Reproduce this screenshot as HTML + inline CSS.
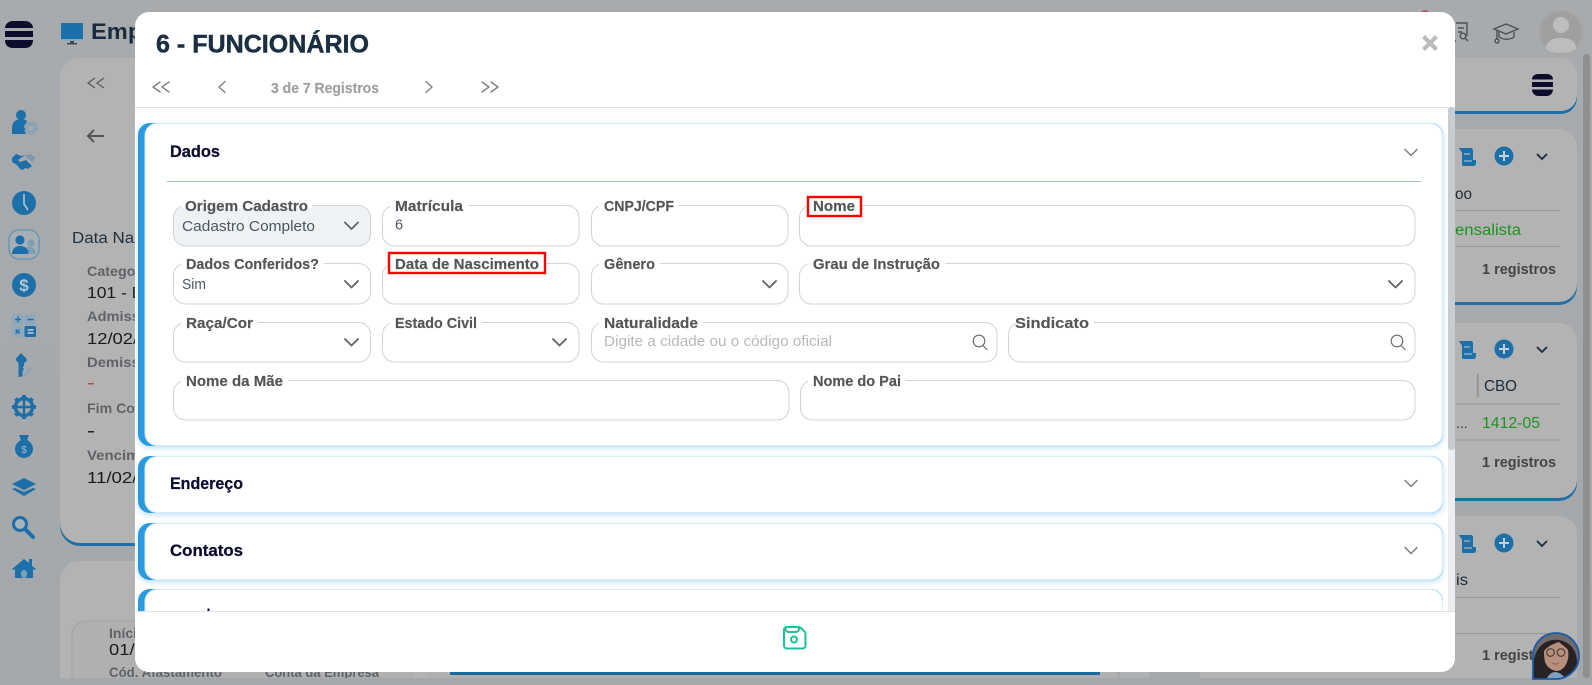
<!DOCTYPE html>
<html lang="pt"><head><meta charset="utf-8"><title>6 - FUNCIONÁRIO</title>
<style>
html,body{margin:0;padding:0;background:#a6a9ac;overflow:hidden}
svg{display:block}
text{font-family:"Liberation Sans",sans-serif}
.l{font-size:14.5px;font-weight:700;fill:#555;stroke:#555;stroke-width:.15px}
.v{font-size:14.5px;fill:#4b5662}
.f{fill:#fff;stroke:#cfd3da;stroke-width:1}
.c{fill:none;stroke:#666;stroke-width:1.9;stroke-linecap:round;stroke-linejoin:round}
.n{fill:none;stroke:#808080;stroke-width:1.4;stroke-linejoin:round;stroke-linecap:round}
.k{fill:none;stroke:#ff0000;stroke-width:2.4}
.h{font-size:16.5px;font-weight:700;fill:#0b0b30;stroke:#0b0b30;stroke-width:.25px}
.bl{font-size:14px;font-weight:700;fill:#5f6368}
.bv{font-size:15.5px;fill:#1a1a1a}
.i{fill:#1c6fa9}
.ln{stroke:#9a9a9d;stroke-width:1.3}
</style></head><body>
<svg width="1592" height="685" viewBox="0 0 1592 685" xmlns="http://www.w3.org/2000/svg">
<defs>
<linearGradient id="g1" x1="0" y1="0" x2="0" y2="1"><stop offset="0" stop-color="#a7abae"/><stop offset="1" stop-color="#a5a8aa"/></linearGradient>
<clipPath id="cl"><rect x="0" y="0" width="1592" height="678"/></clipPath>
<clipPath id="av"><path d="M1533 679V656a23 23 0 1 1 23 23z"/></clipPath>
</defs>
<rect width="1592" height="685" fill="url(#g1)"/>

<!-- background cards -->
<g clip-path="url(#cl)">
<rect x="60" y="61" width="400" height="485" rx="20" fill="#1f6fa6"/>
<rect x="60" y="58" width="400" height="485" rx="20" fill="#b3b3b3"/>
<rect x="60" y="561" width="400" height="140" rx="20" fill="#b3b3b3"/>
<rect x="72" y="621" width="340" height="90" rx="14" fill="#b0b0b0" stroke="#a3a3a3"/>
<rect x="428" y="561" width="690" height="130" fill="#b0b0b0"/>
<rect x="1120" y="561" width="30" height="130" fill="#afb2b4"/>
<rect x="1200" y="61" width="377" height="53" rx="16" fill="#1f6fa6"/>
<rect x="1200" y="58" width="377" height="53" rx="16" fill="#b3b3b3"/>
<rect x="1200" y="132" width="377" height="173" rx="18" fill="#1f6fa6"/>
<rect x="1200" y="129" width="377" height="173" rx="18" fill="#b3b3b3"/>
<rect x="1200" y="326" width="377" height="175" rx="18" fill="#1f6fa6"/>
<rect x="1200" y="323" width="377" height="175" rx="18" fill="#b3b3b3"/>
<rect x="1200" y="516" width="377" height="190" rx="18" fill="#b3b3b3"/>
<rect x="1583" y="54" width="7" height="624" rx="3" fill="#8f8f90"/>
<rect x="450" y="670" width="650" height="5" fill="#1b6a9e"/>
<text x="109" y="638" class="bl">Início</text>
<text x="109" y="655" class="bv" textLength="92" lengthAdjust="spacingAndGlyphs">01/01/2024</text>
<text x="109" y="677" class="bl" textLength="113" lengthAdjust="spacingAndGlyphs">Cód. Afastamento</text>
<text x="265" y="677" class="bl" textLength="114" lengthAdjust="spacingAndGlyphs">Conta da Empresa</text>
</g>

<text x="91" y="39" font-size="22" font-weight="700" fill="#1a2b3c" textLength="100" lengthAdjust="spacingAndGlyphs">Empresa</text>
<!-- monitor -->
<rect x="61" y="23" width="22" height="16" fill="#1c6fa9"/><rect x="61" y="39" width="22" height="2" fill="#88a9bf"/><rect x="70" y="41" width="4" height="2" fill="#445"/><rect x="67" y="43" width="10" height="1.5" fill="#445"/>
<!-- hamburger -->
<g fill="#0c0c2c"><path d="M5 28c0-4 4-7 8-7h12c4 0 8 3 8 7z"/><rect x="5" y="31" width="28" height="6"/><path d="M5 40h28c0 5-3 8-8 8H13c-5 0-8-3-8-8z"/></g>
<!-- sidebar icons -->
<circle cx="21" cy="115" r="5" class="i"/><path class="i" d="M12 134v-6c0-6 4-9 9-9 3 0 5 1 6 2-2 3-3 8-1 13z"/>
<circle cx="31" cy="128" r="4.200" fill="none" stroke="#8ea2b0" stroke-width="3.600"/><circle cx="31" cy="128" r="6.200" fill="none" stroke="#8ea2b0" stroke-width="2" stroke-dasharray="2.600 2.300"/>
<path class="i" d="M12 158l4-4 5 2 4-1-7 5 2 2 6-2 6 6-4 3-3-1-2 2-3-1-3-4-5-3z"/><path d="M25 155l6-1 5 4-4 4-6-5z" fill="#7d99ad"/>
<circle cx="24" cy="203" r="12" class="i"/><path d="M24 194v10l4 6" fill="none" stroke="#b7c5cf" stroke-width="1.6"/>
<rect x="9" y="230" width="30" height="29" rx="10" fill="#a9aeb2" stroke="#5f93b8" stroke-width="1.3"/>
<g class="i"><circle cx="20" cy="240" r="4.6"/><path d="M12 254c0-6 4-8 8-8s9 2 9 8z"/></g><circle cx="31" cy="243" r="3.6" fill="#7d9fb6"/><path d="M28 254c1-4 0-6-1-7 3-1 9 0 9 7z" fill="#7d9fb6"/>
<circle cx="24" cy="285" r="12" class="i"/><text x="24" y="291" font-size="17" font-weight="700" fill="#b4c6d2" text-anchor="middle">$</text>
<g><rect x="12" y="314" width="11.500" height="11" rx="1.500" fill="#8ea9bc"/><rect x="24.500" y="314" width="11.500" height="11" rx="1.500" fill="#8ea9bc"/><rect x="12" y="326" width="11.500" height="11" rx="1.500" fill="#8ea9bc"/><rect x="24.500" y="326" width="11.500" height="11" rx="1.500" fill="#1c6fa9"/>
<path d="M15 319.500h6M18 316.500v6M27.500 319.500h6M15.500 329.500l4 4M19.500 329.500l-4 4" stroke="#1c6fa9" stroke-width="1.400"/><path d="M27.500 330h6M27.500 333h6" stroke="#c4d0d8" stroke-width="1.400"/></g>
<path class="i" d="M21 353l5.500 5.500v3l-2.500 1.500v3l-1.500 1.500 1.500 1.500-1.500 2.500v5l-4 .5v-14l-2.500-2.500v-2z"/><path d="M24 376l7-8" stroke="#8ea2b0" stroke-width="3"/>
<g><circle cx="24" cy="407" r="8.500" fill="none" stroke="#1c6fa9" stroke-width="3.500"/><path d="M24 397v20M14 407h20" stroke="#1c6fa9" stroke-width="2.500"/><path d="M24 395v3M24 416v3M12 407h3M33 407h3M15.500 398.500l2 2M30.500 413.500l2 2M32.500 398.500l-2 2M17.500 413.500l-2 2" stroke="#1c6fa9" stroke-width="4"/></g>
<path class="i" d="M19 435h10l-2 5c4 2 6 6 6 9 0 5-4 9-9 9s-9-4-9-9c0-3 2-7 6-9z"/><text x="24" y="453" font-size="10" fill="#a9bccb" text-anchor="middle">$</text>
<path class="i" d="M24 478l12 6-12 6-12-6z"/><path class="i" d="M12 489l3-1 9 4 9-4 3 1-12 7z"/>
<circle cx="20" cy="524" r="6.500" fill="#a9b5bd" stroke="#1c6fa9" stroke-width="3"/><path d="M25 529l8 8" stroke="#1c6fa9" stroke-width="4" stroke-linecap="round"/>
<path class="i" d="M12 569l12-10 5 4v-4h3v7l4 3-1.500 1-1.500-1v9H15v-9l-1.500 1z"/><rect x="21" y="570" width="6" height="8" rx="3" fill="#7d9fb6"/>

<!-- card contents left -->
<path d="M95 78l-7 5 7 5M104 78l-7 5 7 5" fill="none" stroke="#5c5c5c" stroke-width="1.300"/>
<path d="M88 136h16M94 130l-6 6 6 6" fill="none" stroke="#555" stroke-width="2"/>
<text x="72" y="243" font-size="15.500" fill="#22303c" textLength="130" lengthAdjust="spacingAndGlyphs">Data Nascimento</text>
<text x="87" y="276" class="bl" textLength="66" lengthAdjust="spacingAndGlyphs">Categoria</text>
<text x="87" y="298" class="bv" textLength="135" lengthAdjust="spacingAndGlyphs">101 - Empregado</text>
<text x="87" y="321" class="bl" textLength="70" lengthAdjust="spacingAndGlyphs">Admissão</text>
<text x="87" y="344" class="bv" textLength="92" lengthAdjust="spacingAndGlyphs">12/02/2024</text>
<text x="87" y="367" class="bl" textLength="70" lengthAdjust="spacingAndGlyphs">Demissão</text>
<rect x="88" y="383" width="6" height="1.500" fill="#c0484c"/>
<text x="87" y="413" class="bl" textLength="88" lengthAdjust="spacingAndGlyphs">Fim Contrato</text>
<rect x="88" y="431" width="6" height="1.500" fill="#222"/>
<text x="87" y="460" class="bl" textLength="84" lengthAdjust="spacingAndGlyphs">Vencimento</text>
<text x="87" y="483" class="bv" textLength="92" lengthAdjust="spacingAndGlyphs">11/02/2025</text>

<!-- top right -->
<circle cx="1561" cy="32" r="22" fill="#a0a0a0" stroke="#a8a8a8" stroke-width="2"/><circle cx="1561" cy="25" r="8" fill="#bdbdbd"/><path d="M1546 49c0-8 6-11 15-11s15 3 15 11c-4 3-9 4-15 4s-11-1-15-4z" fill="#bdbdbd"/>
<g fill="none" stroke="#4d5155" stroke-width="1.400"><path d="M1456 23h11v13M1456 41h-3v-2"/><path d="M1458 28h6M1458 32h4"/><circle cx="1463" cy="36" r="2.800"/><path d="M1465 38l3 3"/>
<path d="M1494 29l12-5 12 5-12 5zM1499 32v5c4 3 11 3 15 0v-5M1497 30v9"/><circle cx="1497" cy="41" r="2"/></g>
<circle cx="1425" cy="15" r="5" fill="#b45c5c"/>
<g fill="#0c0c2c"><path d="M1532 79.500c0-3.500 3-5.500 6-5.500h9c3 0 6 2 6 5.500z"/><rect x="1532" y="82" width="21" height="5"/><path d="M1532 89.500h21c0 3.500-3 6.500-6 6.500h-9c-3 0-6-3-6-6.500z"/></g>

<!-- right card rows -->
<g><path class="i" d="M1459 148h12c1 0 2 1 2 2v10h3v3c0 2-1 3-3 3h-9c-2 0-2-1-2-3v-10c0-1-1-2-2-3z"/><path d="M1464 154h6M1464 161h8" stroke="#b3b3b3" stroke-width="1.300"/><circle cx="1504" cy="156" r="9.500" class="i"/><path d="M1504 151v10M1499 156h10" stroke="#c5d1da" stroke-width="2"/><path d="M1537 154l5 5 5-5" fill="none" stroke="#1b2b3a" stroke-width="1.800"/></g>
<g><path class="i" d="M1459 341h12c1 0 2 1 2 2v10h3v3c0 2-1 3-3 3h-9c-2 0-2-1-2-3v-10c0-1-1-2-2-3z"/><path d="M1464 347h6M1464 354h8" stroke="#b3b3b3" stroke-width="1.300"/><circle cx="1504" cy="349" r="9.500" class="i"/><path d="M1504 344v10M1499 349h10" stroke="#c5d1da" stroke-width="2"/><path d="M1537 347l5 5 5-5" fill="none" stroke="#1b2b3a" stroke-width="1.800"/></g>
<g><path class="i" d="M1459 535h12c1 0 2 1 2 2v10h3v3c0 2-1 3-3 3h-9c-2 0-2-1-2-3v-10c0-1-1-2-2-3z"/><path d="M1464 541h6M1464 548h8" stroke="#b3b3b3" stroke-width="1.300"/><circle cx="1504" cy="543" r="9.500" class="i"/><path d="M1504 538v10M1499 543h10" stroke="#c5d1da" stroke-width="2"/><path d="M1537 541l5 5 5-5" fill="none" stroke="#1b2b3a" stroke-width="1.800"/></g>
<text x="1455" y="199" font-size="15.500" fill="#1e2b38" textLength="17" lengthAdjust="spacingAndGlyphs">oo</text>
<path class="ln" d="M1456 210.500H1560M1456 246.500H1560M1456 404H1560M1456 440H1560M1456 597.500H1560M1456 633.500H1560"/>
<text x="1455" y="235" font-size="15.500" fill="#1d9420" textLength="66" lengthAdjust="spacingAndGlyphs">ensalista</text>
<text x="1482" y="274" font-size="14.500" font-weight="700" fill="#444" textLength="74" lengthAdjust="spacingAndGlyphs">1 registros</text>
<rect x="1477" y="374" width="1.500" height="23" fill="#8a8f94"/>
<text x="1484" y="391" font-size="15.500" fill="#1e2b38" textLength="33" lengthAdjust="spacingAndGlyphs">CBO</text>
<text x="1456" y="428" font-size="14" fill="#333">...</text>
<text x="1482" y="428" font-size="15.500" fill="#1d9420" textLength="58" lengthAdjust="spacingAndGlyphs">1412-05</text>
<text x="1482" y="467" font-size="14.500" font-weight="700" fill="#444" textLength="74" lengthAdjust="spacingAndGlyphs">1 registros</text>
<text x="1456" y="585" font-size="15.500" fill="#1e2b38" textLength="12" lengthAdjust="spacingAndGlyphs">is</text>
<text x="1482" y="660" font-size="14.500" font-weight="700" fill="#444" textLength="74" lengthAdjust="spacingAndGlyphs">1 registros</text>

<!-- avatar -->
<path d="M1533 679V656a23 23 0 1 1 23 23z" fill="#6f6a6c"/>
<g clip-path="url(#av)">
<path d="M1534 680c-3-14-1-36 18-40 13-2 26 7 25 24-1 6-4 10-8 10l-10 6z" fill="#282226"/>
<path d="M1544 651c4-5 9-7 15-9 3 3 7 5 9 8 1 6 0 12-3 16-3 4-6 5-9 5-5-1-9-4-11-9-1-4-1-8-1-11z" fill="#b88e7c"/>
<circle cx="1550.500" cy="652.500" r="3.800" fill="none" stroke="#4a3a36" stroke-width="1.100"/><circle cx="1561" cy="652.500" r="3.800" fill="none" stroke="#4a3a36" stroke-width="1.100"/>
<path d="M1552 663c2 1.500 5 1.500 7 0" fill="none" stroke="#8a5a50" stroke-width="1"/>
<path d="M1546 680c2-5 6-8 9-8s8 2 11 8z" fill="#7fa0c0"/>
</g>
<path d="M1533 679V656a23 23 0 1 1 23 23z" fill="none" stroke="#1c5aa8" stroke-width="1.800"/>

<!-- modal -->
<rect x="135" y="12" width="1320" height="660" rx="14" fill="#fff"/>
<rect x="1448" y="107" width="7" height="504" fill="#eceef1"/>
<rect x="1448" y="107" width="7" height="343" rx="3" fill="#c9cdd2"/>
<text x="156" y="52.500" font-size="25" font-weight="700" fill="#1b2e42" stroke="#1b2e42" stroke-width=".45" textLength="213" lengthAdjust="spacingAndGlyphs">6 - FUNCIONÁRIO</text>
<path d="M1423.500 36.500l13 13M1436.500 36.500l-13 13" stroke="#bcbcbc" stroke-width="4.200" fill="none"/>
<path class="n" d="M160 82l-7 5 7 5M169 82l-7 5 7 5M225 81.500l-6 5.500 6 5.500M426 81.500l6 5.500-6 5.500M482 82l7 5-7 5M491 82l7 5-7 5"/>
<text x="271" y="93" font-size="14.500" font-weight="700" fill="#a0a0a0" stroke="#a0a0a0" stroke-width=".2" textLength="108" lengthAdjust="spacingAndGlyphs">3 de 7 Registros</text>
<rect x="135" y="107" width="1313" height="1" fill="#e2e3e5"/>

<!-- accordions -->
<g style="filter:drop-shadow(0 2px 3px #bcdff5)">
<rect x="138" y="123" width="1305" height="323" rx="12" fill="#2a9ae0"/><rect x="145" y="123.500" width="1297.500" height="322" rx="12" fill="#fff" stroke="#d9edf9"/>
</g>
<g style="filter:drop-shadow(0 2px 3px #bcdff5)">
<rect x="138" y="456" width="1305" height="57" rx="12" fill="#2a9ae0"/><rect x="145" y="456.500" width="1297.500" height="56" rx="12" fill="#fff" stroke="#d9edf9"/>
</g>
<g style="filter:drop-shadow(0 2px 3px #bcdff5)">
<rect x="138" y="523" width="1305" height="57" rx="12" fill="#2a9ae0"/><rect x="145" y="523.500" width="1297.500" height="56" rx="12" fill="#fff" stroke="#d9edf9"/>
</g>
<rect x="138" y="589" width="1305" height="57" rx="12" fill="#2a9ae0"/><rect x="145" y="589.500" width="1297.500" height="56" rx="12" fill="#fff" stroke="#d9edf9"/>
<rect x="207.500" y="608.500" width="2" height="2.500" fill="#0b0b30"/>
<path d="M135 611h1320v47a14 14 0 0 1-14 14H149a14 14 0 0 1-14-14z" fill="#fff"/>
<rect x="135" y="611" width="1320" height="1" fill="#e2e3e5"/>

<text x="170" y="157" class="h" textLength="50" lengthAdjust="spacingAndGlyphs">Dados</text>
<text x="170" y="489" class="h" textLength="73" lengthAdjust="spacingAndGlyphs">Endereço</text>
<text x="170" y="556" class="h" textLength="73" lengthAdjust="spacingAndGlyphs">Contatos</text>
<path class="n" style="stroke-width:1.500" d="M1405 149.500l6 6 6-6M1405 480.500l6 6 6-6M1405 547.500l6 6 6-6"/>
<rect x="167" y="181" width="1254" height="1" fill="#9fbdd4"/>

<!-- fields row 1 -->
<rect x="173.500" y="205.500" width="197" height="40.500" rx="12" fill="#eff2f5" stroke="#cfd3da"/>
<rect x="382.500" y="205.500" width="196.500" height="40.500" rx="12" class="f"/>
<rect x="591.500" y="205.500" width="196.500" height="40.500" rx="12" class="f"/>
<rect x="799.500" y="205.500" width="615.500" height="40.500" rx="12" class="f"/>
<!-- row 2 -->
<rect x="173.500" y="263.500" width="197" height="40.500" rx="12" class="f"/>
<rect x="382.500" y="263.500" width="196.500" height="40.500" rx="12" class="f"/>
<rect x="591.500" y="263.500" width="196.500" height="40.500" rx="12" class="f"/>
<rect x="799.500" y="263.500" width="615.500" height="40.500" rx="12" class="f"/>
<!-- row 3 -->
<rect x="173.500" y="322.500" width="197" height="39.500" rx="12" class="f"/>
<rect x="382.500" y="322.500" width="196.500" height="39.500" rx="12" class="f"/>
<rect x="591.500" y="322.500" width="405.500" height="39.500" rx="12" class="f"/>
<rect x="1008.500" y="322.500" width="406.500" height="39.500" rx="12" class="f"/>
<!-- row 4 -->
<rect x="173.500" y="380.500" width="615.500" height="39.500" rx="12" class="f"/>
<rect x="800.500" y="380.500" width="614.500" height="39.500" rx="12" class="f"/>

<!-- label gaps -->
<g fill="#fff">
<rect x="181" y="203" width="131" height="5"/><rect x="390" y="203" width="78" height="5"/><rect x="599" y="203" width="80" height="5"/><rect x="808" y="203" width="52" height="5"/>
<rect x="181" y="261" width="143" height="5"/><rect x="390" y="261" width="154" height="5"/><rect x="599" y="261" width="61" height="5"/><rect x="808" y="261" width="137" height="5"/>
<rect x="181" y="320" width="77" height="5"/><rect x="390" y="320" width="92" height="5"/><rect x="599" y="320" width="104" height="5"/><rect x="1020" y="320" width="74" height="5"/>
<rect x="181" y="378" width="107" height="5"/><rect x="808" y="378" width="98" height="5"/>
</g>
<text x="185" y="211" class="l" textLength="123" lengthAdjust="spacingAndGlyphs">Origem Cadastro</text>
<text x="395" y="211" class="l" textLength="68" lengthAdjust="spacingAndGlyphs">Matrícula</text>
<text x="604" y="211" class="l" textLength="70" lengthAdjust="spacingAndGlyphs">CNPJ/CPF</text>
<text x="813" y="211" class="l" textLength="42" lengthAdjust="spacingAndGlyphs">Nome</text>
<text x="186" y="269" class="l" textLength="133" lengthAdjust="spacingAndGlyphs">Dados Conferidos?</text>
<text x="395" y="269" class="l" textLength="144" lengthAdjust="spacingAndGlyphs">Data de Nascimento</text>
<text x="604" y="269" class="l" textLength="51" lengthAdjust="spacingAndGlyphs">Gênero</text>
<text x="813" y="269" class="l" textLength="127" lengthAdjust="spacingAndGlyphs">Grau de Instrução</text>
<text x="186" y="328" class="l" textLength="67" lengthAdjust="spacingAndGlyphs">Raça/Cor</text>
<text x="395" y="328" class="l" textLength="82" lengthAdjust="spacingAndGlyphs">Estado Civil</text>
<text x="604" y="328" class="l" textLength="94" lengthAdjust="spacingAndGlyphs">Naturalidade</text>
<text x="1015" y="328" class="l" textLength="74" lengthAdjust="spacingAndGlyphs">Sindicato</text>
<text x="186" y="386" class="l" textLength="97" lengthAdjust="spacingAndGlyphs">Nome da Mãe</text>
<text x="813" y="386" class="l" textLength="88" lengthAdjust="spacingAndGlyphs">Nome do Pai</text>

<text x="182" y="231" class="v" textLength="133" lengthAdjust="spacingAndGlyphs">Cadastro Completo</text>
<text x="395" y="229.500" class="v">6</text>
<text x="182" y="289" class="v" textLength="24" lengthAdjust="spacingAndGlyphs">Sim</text>
<text x="604" y="346" class="v" style="fill:#b8b8b8" textLength="228" lengthAdjust="spacingAndGlyphs">Digite a cidade ou o código oficial</text>

<path class="c" d="M345 222.500l6.500 6.500 6.500-6.500M345 281l6.500 6.500 6.500-6.500M345 339l6.500 6.500 6.500-6.500M553 339l6.500 6.500 6.500-6.500M763 281l6.500 6.500 6.500-6.500M1389 281l6.500 6.500 6.500-6.500"/>
<g fill="none" stroke="#666" stroke-width="1.100"><circle cx="979" cy="341" r="5.800"/><path d="M983 345.500l4.500 4.500"/><circle cx="1397" cy="341" r="5.800"/><path d="M1401 345.500l4.500 4.500"/></g>

<!-- red highlights -->
<rect x="389" y="253" width="156" height="20" class="k"/>
<rect x="808" y="197" width="53" height="19" class="k"/>

<!-- save -->
<g fill="none" stroke="#17c39a" stroke-width="2"><path d="M787 627h11.500c1 0 1.800.4 2.500 1l3.500 3.500c.7.700 1 1.500 1 2.500v11.500c0 1.700-1.300 3-3 3h-15.500c-1.700 0-3-1.300-3-3v-15.500c0-1.700 1.300-3 3-3z"/><path d="M785.500 627v1.500c0 2 1.500 3.500 3.500 3.500h7c2 0 3-1.500 3-3.500v-1.500"/><circle cx="794" cy="639.500" r="3"/></g>
</svg>
</body></html>
